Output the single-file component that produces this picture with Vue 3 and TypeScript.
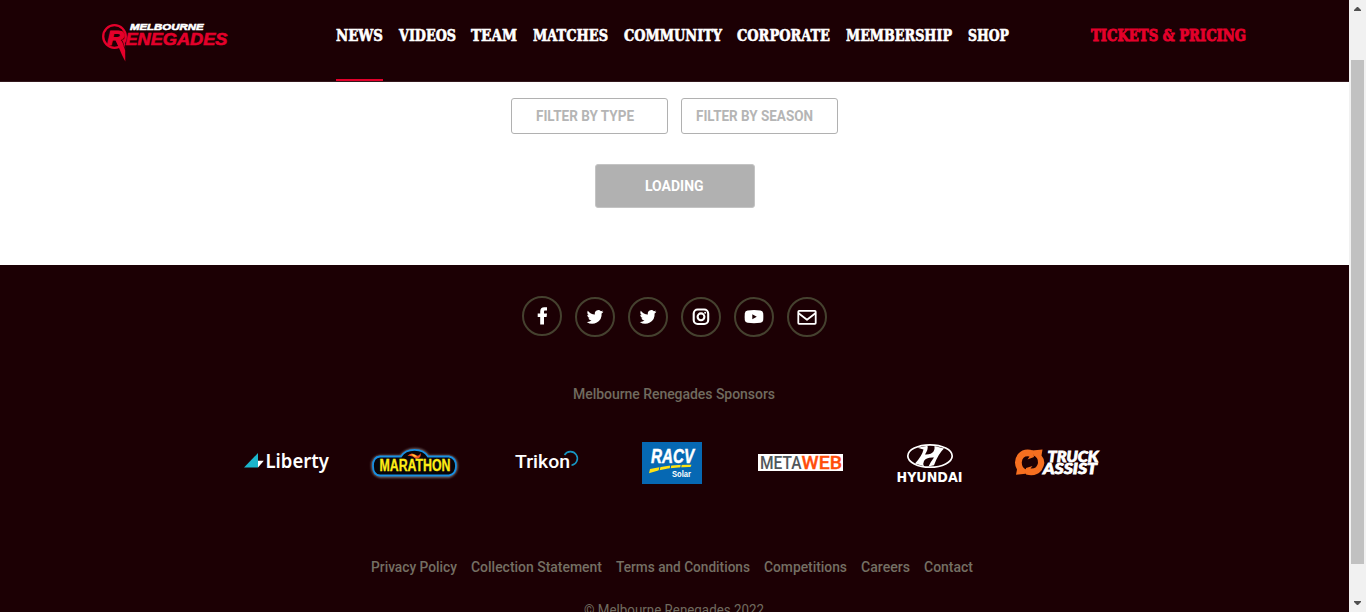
<script setup lang="ts">
interface FittedLabel {
  label: string
  width: number
}

const navItems: FittedLabel[] = [
  { label: 'NEWS', width: 47 },
  { label: 'VIDEOS', width: 57 },
  { label: 'TEAM', width: 46 },
  { label: 'MATCHES', width: 75 },
  { label: 'COMMUNITY', width: 98 },
  { label: 'CORPORATE', width: 93 },
  { label: 'MEMBERSHIP', width: 106 },
  { label: 'SHOP', width: 41 },
]

const filters: FittedLabel[] = [
  { label: 'FILTER BY TYPE', width: 98 },
  { label: 'FILTER BY SEASON', width: 117 },
]

const footerLinks: FittedLabel[] = [
  { label: 'Privacy Policy', width: 86 },
  { label: 'Collection Statement', width: 131 },
  { label: 'Terms and Conditions', width: 134 },
  { label: 'Competitions', width: 83 },
  { label: 'Careers', width: 49 },
  { label: 'Contact', width: 49 },
]

const social: string[] = ['facebook', 'twitter', 'twitter', 'instagram', 'youtube', 'email']
</script>

<template>
  <div class="window">
    <div class="page">
      <header class="header">
        <svg class="logo" width="130" height="44" viewBox="100 20 130 44">
          <circle cx="114.5" cy="36.5" r="11.3" fill="none" stroke="#e4002b" stroke-width="2.3" />
          <path d="M116 41L125 39L125.3 61.5L122 55Z" fill="#e4002b" />
          <path d="M118.5 41.5L122 40.5L125.5 50" fill="none" stroke="#1c0004" stroke-width=".8" />
          <text x="107" y="45" class="mark big" textLength="17" lengthAdjust="spacingAndGlyphs">R</text>
          <text x="125.5" y="45" class="mark" textLength="102" lengthAdjust="spacingAndGlyphs">ENEGADES</text>
          <text x="130" y="30" class="mark city" textLength="73.5" lengthAdjust="spacingAndGlyphs">MELBOURNE</text>
        </svg>
        <nav class="nav">
          <a v-for="(item, i) in navItems" :key="item.label" class="nav-item" :class="{ active: i === 0 }">
            <svg :width="item.width" height="20">
              <text class="slab" x="0" y="16" :textLength="item.width" lengthAdjust="spacingAndGlyphs">{{ item.label }}</text>
            </svg>
          </a>
        </nav>
        <a class="tickets">
          <svg width="156" height="20">
            <text class="slab red" x="0" y="16" textLength="155" lengthAdjust="spacingAndGlyphs">TICKETS &amp; PRICING</text>
          </svg>
        </a>
      </header>

      <main class="main">
        <div class="filters">
          <div v-for="(f, i) in filters" :key="f.label" class="filter" :class="{ first: i === 0 }">
            <svg :width="f.width" height="20">
              <text x="0" y="15" :textLength="f.width" lengthAdjust="spacingAndGlyphs">{{ f.label }}</text>
            </svg>
          </div>
        </div>
        <button class="loading">
          <svg width="59" height="20">
            <text x="0" y="15" textLength="58.5" lengthAdjust="spacingAndGlyphs">LOADING</text>
          </svg>
        </button>
      </main>

      <footer class="footer">
        <div class="social">
          <a v-for="(kind, i) in social" :key="i" class="circle" :class="kind">
            <svg v-if="kind === 'facebook'" width="20" height="20" viewBox="0 0 20 20">
              <path d="M8.2 18.6V10.9H5.7V7.6H8.2V5.5C8.2 2.7 9.7 1.2 12.2 1.2H15V4.6H13.2C12.3 4.6 12 5.1 12 5.9V7.6H15L14.6 10.9H12V18.6Z" />
            </svg>
            <svg v-else-if="kind === 'twitter'" width="20" height="20" viewBox="0 0 20 20">
              <path d="M18.4 4.7c-.6.3-1.2.5-1.8.5.7-.4 1.2-1 1.4-1.7-.6.4-1.3.6-2.1.8A3.5 3.5 0 0 0 9.9 7.5C7 7.4 4.5 6 2.8 3.8c-.9 1.5-.5 3.4 1 4.4-.5 0-1-.1-1.5-.4 0 1.6 1.1 3 2.7 3.3-.5.1-1 .2-1.5.1.4 1.3 1.6 2.2 3 2.3-1.4 1.1-3.1 1.6-4.8 1.4a9.4 9.4 0 0 0 14.9-8.4c.7-.5 1.3-1.1 1.8-1.8z" />
            </svg>
            <svg v-else-if="kind === 'instagram'" width="20" height="20" viewBox="0 0 20 20">
              <rect x="2.7" y="2.5" width="14.5" height="14.5" rx="4" class="line" />
              <circle cx="10" cy="9.8" r="3.4" class="line" />
              <circle cx="14.1" cy="5.7" r="1" />
            </svg>
            <svg v-else-if="kind === 'youtube'" width="20" height="20" viewBox="0 0 20 20">
              <path fill-rule="evenodd" d="M3.6 3.6Q10 2.6 16.4 3.6Q18.8 4 19.2 6.2Q19.5 9.8 19.2 13.2Q18.8 15.5 16.4 15.8Q10 16.5 3.6 15.8Q1.2 15.5 .8 13.2Q.5 9.8 .8 6.2Q1.2 4 3.6 3.6ZM8.3 7.2V12.2L12.8 9.7Z" />
            </svg>
            <svg v-else width="20" height="20" viewBox="0 0 20 20">
              <rect x="1.3" y="3.9" width="17.4" height="13" rx=".8" class="line thin" />
              <path d="M1.6 6.2L10 12.8L18.4 6.2" class="line thin" />
            </svg>
          </a>
        </div>

        <svg class="sponsor-title" width="203" height="20">
          <text x="0" y="15" textLength="202" lengthAdjust="spacing">Melbourne Renegades Sponsors</text>
        </svg>

        <div class="sponsors">
          <svg width="128" height="60" viewBox="222 435 128 60">
            <path d="M244 467.5L258 453V467.5Z" fill="#1bb5cc" />
            <path d="M258 460.7H263.8L258 467.5Z" fill="#fff" />
            <text x="265.5" y="468" class="liberty" textLength="63.5" lengthAdjust="spacingAndGlyphs">Liberty</text>
          </svg>

          <svg width="128" height="60" viewBox="350 435 128 60">
            <defs>
              <filter id="glow" x="-10%" y="-20%" width="120%" height="150%">
                <feGaussianBlur stdDeviation="1" />
              </filter>
            </defs>
            <path d="M380 456.5H401Q405 449.5 415 449.5T428 456.5H449Q456.5 458 456.5 466T449 476.5H380Q372.5 475 372.5 466T380 456.5Z" fill="none" stroke="#777073" stroke-width="2.5" filter="url(#glow)" />
            <path d="M380 456.5H401Q405 449.8 414.5 449.8T428 456.5H449Q456 458 456 466T449 475.5H380Q373 475 373 466T380 456.5Z" fill="#090508" stroke="#178fe2" stroke-width="1.8" />
            <path d="M407.5 456Q411 451.5 416 455Q419 457 420.5 453Q422 458 416 459Q412 455 407.5 456Z" fill="#f25124" />
            <path d="M411 454.5Q415 453.5 417 457Q414 457 411 454.5Z" fill="#ffd22d" />
            <text x="379.5" y="471.3" class="marathon" textLength="71" lengthAdjust="spacingAndGlyphs">MARATHON</text>
          </svg>

          <svg width="128" height="60" viewBox="478 435 128 60">
            <text x="515" y="467.7" class="trikon" textLength="55" lengthAdjust="spacingAndGlyphs">Trikon</text>
            <path d="M564.5 455A6.9 6.9 0 1 1 571.5 465.3" fill="none" stroke="#1796c3" stroke-width="1.6" />
          </svg>

          <svg width="128" height="60" viewBox="606 435 128 60">
            <rect x="642" y="442" width="60" height="42" fill="#0668b3" />
            <text x="651" y="463" class="racv" textLength="43" lengthAdjust="spacingAndGlyphs">RACV</text>
            <path d="M649 473.2L650 469Q670 464.4 691.5 464.8L690.5 467Q668 466.7 649 473.2Z" fill="#ffe313" />
            <path d="M660.5 464.5L659 471M671 463.5L670 470M681.5 463L680.5 469" stroke="#0668b3" stroke-width="1" />
            <text x="672" y="477" class="solar" textLength="19" lengthAdjust="spacingAndGlyphs">Solar</text>
          </svg>

          <svg width="128" height="60" viewBox="734 435 128 60">
            <rect x="758" y="454" width="85" height="17" fill="#fff" />
            <text x="760" y="468.6" class="metaweb" textLength="41.5" lengthAdjust="spacingAndGlyphs">META</text>
            <text x="801.5" y="468.6" class="metaweb orange" textLength="40.5" lengthAdjust="spacingAndGlyphs">WEB</text>
          </svg>

          <svg width="128" height="60" viewBox="862 435 128 60">
            <ellipse cx="930" cy="456" rx="22.2" ry="11.2" fill="none" stroke="#fff" stroke-width="1.7" />
            <path d="M917.5 447.8L927.5 445.8Q928.5 449 925 454.5Q931 455 933.5 451.5Q935 449 934.5 446L944 448.6Q938.5 453.5 934 465.3L928.5 466.5Q930.5 462 934 457.5Q926 457 924 461Q922.5 464 924 466.3L915 463.5Q922 456 923.5 449.5Z" fill="#fff" />
            <text x="896.5" y="482" class="hyundai" textLength="66" lengthAdjust="spacingAndGlyphs">HYUNDAI</text>
          </svg>

          <svg width="128" height="60" viewBox="990 435 128 60">
            <g fill="#f66f20">
              <path d="M1033 450.5Q1024 447.5 1018 454Q1012.5 461.5 1017 469.5L1016 474.7L1028 473.5L1026.3 469.5Q1021.5 467.5 1021.8 462Q1022.5 455.5 1029.5 456.5L1027.5 459.5L1034 457Z" />
              <path d="M1026 474.5Q1036 477 1041.5 470.5Q1047 462 1041.5 455.5L1042.5 449.5L1032 450.5L1033.5 455.5Q1038.5 457.5 1038 463Q1037 469 1030.5 468.5L1032.5 466L1026 468Z" />
            </g>
            <text x="1047.5" y="461.5" class="truck" textLength="51" lengthAdjust="spacingAndGlyphs">TRUCK</text>
            <text x="1043" y="473.8" class="truck" textLength="54" lengthAdjust="spacingAndGlyphs">ASSIST</text>
          </svg>
        </div>

        <div class="links">
          <svg v-for="link in footerLinks" :key="link.label" :width="link.width" height="20">
            <text x="0" y="15" :textLength="link.width" lengthAdjust="spacingAndGlyphs">{{ link.label }}</text>
          </svg>
        </div>
        <svg class="copyright" width="181" height="20">
          <text x="0" y="15" textLength="180" lengthAdjust="spacingAndGlyphs">© Melbourne Renegades 2022</text>
        </svg>
      </footer>
    </div>

    <div class="scrollbar">
      <svg class="arrow" width="7" height="4" viewBox="0 0 7 4"><path d="M0 4V3L3 0H4L7 3V4Z" /></svg>
      <div class="thumb"></div>
      <svg class="arrow" width="7" height="4" viewBox="0 0 7 4"><path d="M0 0V1L3 4H4L7 1V0Z" /></svg>
    </div>
  </div>
</template>

<style>
html,
body {
  margin: 0;
  overflow: hidden;
}
</style>

<style scoped>
.window {
  display: flex;
  width: 1366px;
  height: 612px;
  overflow: hidden;
  font-family: Roboto, sans-serif;
}
svg {
  display: block;
  overflow: visible;
  flex: none;
}
.page {
  width: 1349px;
  height: 612px;
  overflow: hidden;
  background: #fff;
}
.header {
  box-sizing: border-box;
  display: flex;
  height: 82px;
  padding-left: 100px;
  background: #1c0004;
  border-bottom: 1px solid #33191d;
}
.logo {
  margin-top: 20px;
}
.mark {
  font: italic bold 17px 'Liberation Sans', sans-serif;
  fill: #e4002b;
  stroke: #e4002b;
  stroke-width: 0.6;
}
.mark.big {
  font-size: 21px;
  stroke-width: 1.2;
}
.mark.city {
  font-size: 9.8px;
  fill: #fff;
  stroke: #fff;
}
.nav {
  display: flex;
  gap: 15.7px;
  margin-left: 106px;
}
.nav-item {
  box-sizing: border-box;
  height: 81px;
  padding-top: 25px;
}
.nav-item.active {
  border-bottom: 2px solid #e4002b;
}
.slab {
  font: bold 16px 'DejaVu Serif Condensed', 'DejaVu Serif', serif;
  fill: #fff;
  stroke: #fff;
  stroke-width: 0.6;
}
.slab.red {
  fill: #e4002b;
  stroke: #e4002b;
  stroke-width: 0.9;
}
.tickets {
  margin-left: 82.5px;
  padding-top: 25px;
}
.main {
  display: flex;
  flex-direction: column;
  align-items: center;
  height: 183px;
}
.filters {
  display: flex;
  gap: 13px;
  margin-top: 16px;
}
.filter {
  box-sizing: border-box;
  width: 157px;
  height: 36px;
  padding: 7px 0 0 14px;
  border: 1px solid #b1b1b1;
  border-radius: 3px;
  font-size: 14px;
  font-weight: 700;
  fill: #b5b5b5;
}
.filter.first {
  padding-left: 24px;
}
.loading {
  box-sizing: border-box;
  display: flex;
  justify-content: center;
  width: 160px;
  height: 44px;
  margin-top: 30px;
  padding: 11px 1px 0 0;
  background: #b1b1b1;
  border: 1px solid #c4c4c4;
  border-radius: 3px;
  font: 700 14px Roboto, sans-serif;
  fill: #fff;
}
.footer {
  display: flex;
  flex-direction: column;
  align-items: center;
  height: 400px;
  background: #1c0004;
}
.social {
  display: flex;
  gap: 13px;
  margin-top: 31px;
}
.circle {
  box-sizing: border-box;
  display: flex;
  align-items: center;
  justify-content: center;
  width: 40px;
  height: 40px;
  margin-top: 1px;
  border: 2px solid #45412f;
  border-radius: 50%;
  fill: #fff;
}
.circle.facebook {
  margin-top: 0;
}
.line {
  fill: none;
  stroke: #fff;
  stroke-width: 2.1;
}
.line.thin {
  stroke-width: 1.8;
  stroke-linejoin: round;
}
.sponsor-title {
  margin-top: 47px;
  font-size: 14px;
  font-weight: 500;
  fill: #706b5f;
}
.sponsors {
  display: flex;
  width: 905px;
  margin-top: 31px;
}
.liberty {
  font: 600 20px 'Noto Sans', sans-serif;
  fill: #fff;
}
.marathon {
  font: bold 16px 'Liberation Sans Narrow', 'Liberation Sans', sans-serif;
  fill: #ffed16;
  stroke: #ffed16;
  stroke-width: 0.3;
}
.trikon {
  font: 500 19px Roboto, sans-serif;
  fill: #fff;
}
.racv {
  font: italic bold 20px 'Liberation Sans', sans-serif;
  fill: #fff;
  stroke: #fff;
  stroke-width: 0.5;
}
.solar {
  font: bold 9.5px 'Liberation Sans', sans-serif;
  fill: #fff;
}
.metaweb {
  font: 500 18px Roboto, sans-serif;
  fill: #50565a;
}
.metaweb.orange {
  fill: #ff4d0b;
  stroke: #ff4d0b;
  stroke-width: 0.3;
}
.hyundai {
  font: bold 13.5px 'DejaVu Sans', sans-serif;
  fill: #fff;
}
.truck {
  font: italic 900 15px Lato, 'Liberation Sans', sans-serif;
  fill: #fff;
  stroke: #fff;
  stroke-width: 0.8;
}
.links {
  display: flex;
  gap: 14px;
  width: 607px;
  margin-top: 62px;
  font-size: 14px;
  font-weight: 500;
  fill: #746f63;
}
.copyright {
  margin-top: 23px;
  font-size: 14px;
  fill: #706b5f;
}
.scrollbar {
  box-sizing: border-box;
  display: flex;
  flex-direction: column;
  align-items: center;
  width: 17px;
  height: 612px;
  padding-top: 7px;
  background: #f1f1f1;
}
.arrow {
  fill: #505050;
}
.thumb {
  width: 13px;
  height: 504px;
  margin: 49px 0 37px;
  background: #c1c1c1;
}
</style>
